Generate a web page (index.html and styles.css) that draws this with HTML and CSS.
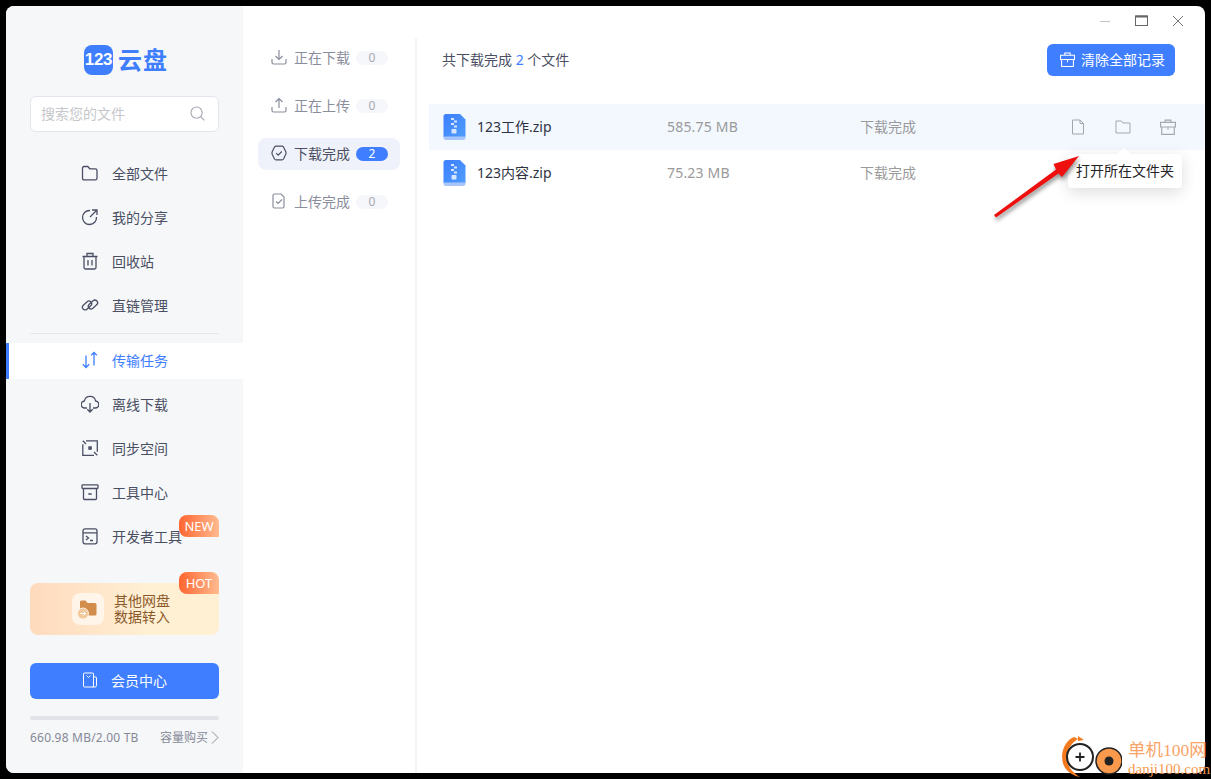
FILE: index.html
```html
<!DOCTYPE html>
<html lang="zh-CN">

<head>
    <meta charset="UTF-8">
    <title>123云盘</title>
    <link rel="stylesheet" href="styles.css">
</head>

<body>
    <div class="window">
        <!-- 左侧导航 -->
        <aside class="side">
            <div class="logo">
                <span class="logo-mark">123</span>
                <span class="logo-text">云盘</span>
            </div>
            <div class="search">
                <span>搜索您的文件</span>
                <svg width="15" height="15" viewBox="0 0 16 16" fill="none" stroke="#a4a7b2" stroke-width="1.200"><circle cx="7" cy="7" r="6"/><path d="M11.500 11.500l3.800 3.800"/></svg>
            </div>
            <nav class="nav">
                <a class="nav-item">
                    <svg viewBox="0 0 18 18"><path d="M1.500 4.200q0-1.700 1.700-1.700h3.600l2 2.300h5.500q1.700 0 1.700 1.700v7.700q0 1.700-1.700 1.700h-11.100q-1.700 0-1.700-1.700z"/></svg>
                    全部文件
                </a>
                <a class="nav-item">
                    <svg viewBox="0 0 18 18"><path d="M9 2.500a7 7 0 1 0 6.500 6.500"/><path d="M9 9l6.500-6.500M11 2h5v5"/></svg>
                    我的分享
                </a>
                <a class="nav-item">
                    <svg viewBox="0 0 18 18"><path d="M1.500 4.500h15M6 4.500v-3h6v3M3 4.500v11q0 1.500 1.500 1.500h9q1.500 0 1.500-1.500v-11M7 8v5.500M11 8v5.500"/></svg>
                    回收站
                </a>
                <a class="nav-item">
                    <svg viewBox="0 0 18 18"><rect x="0.800" y="6.800" width="10.500" height="5.400" rx="2.700" transform="rotate(-42 6 9.500)"/><rect x="6.700" y="5.800" width="10.500" height="5.400" rx="2.700" transform="rotate(-42 12 8.500)"/></svg>
                    直链管理
                </a>
                <div class="nav-line"></div>
                <a class="nav-item active">
                    <svg viewBox="0 0 18 18"><path d="M5 4.500v12M1.800 13.300l3.200 3.200 3.200-3.200M13 14.500v-13M10.200 4.300l2.800-2.800 2.800 2.800"/></svg>
                    传输任务
                </a>
                <a class="nav-item">
                    <svg viewBox="0 0 18 18"><path d="M6 13h-2a3.500 3.500 0 0 1-.6-7 5.700 5.700 0 0 1 11.200 0 3.500 3.500 0 0 1-.6 7h-2"/><path d="M9 8v9M6.300 14.300l2.700 2.700 2.700-2.700"/></svg>
                    离线下载
                </a>
                <a class="nav-item">
                    <svg viewBox="0 0 18 18"><path d="M5 1.800h11.300v11M13 16.300h-11.200v-11M1.800 1.800l3.200 3.200M16.300 16.300l-3.300-3.300"/><rect class="solid" x="7.300" y="7.300" width="3.500" height="3.500"/></svg>
                    同步空间
                </a>
                <a class="nav-item">
                    <svg viewBox="0 0 18 18"><rect x="1" y="1.800" width="16" height="3.700" rx=".8"/><path d="M2.500 5.500v10q0 1 1 1h11q1 0 1-1v-10M7.300 11h3.400"/></svg>
                    工具中心
                </a>
                <a class="nav-item">
                    <svg viewBox="0 0 18 18"><rect x="2" y="1.800" width="14" height="15" rx="2"/><path d="M2 5.800h14M5 9l2.500 2-2.500 2M9 13.500h3"/></svg>
                    开发者工具
                    <span class="tag">NEW</span>
                </a>
            </nav>
            <div class="promo">
                <span class="promo-icon">
                    <svg width="22" height="22" viewBox="0 0 22 22"><path d="M3 4q0-1.500 1.500-1.500h4l2 2.500h7.500q1.500 0 1.500 1.500v9.500q0 1.500-1.500 1.500h-13.500q-1.500 0-1.500-1.500z" fill="#d28c4b"/><circle cx="6" cy="15.500" r="5.500" fill="#f3c99c" stroke="#fdf0e0"/><path d="M3.500 15.500h5M6.500 13.500l2 2-2 2" fill="none" stroke="#fff" stroke-width="1"/></svg>
                </span>
                <span class="promo-text">其他网盘<br>数据转入</span>
                <span class="tag">HOT</span>
            </div>
            <a class="vip">
                <svg width="16" height="16" viewBox="0 0 16 16" fill="none" stroke="#fff" stroke-width="1"><path d="M1.500 2q0-1 1-1h8q1 0 1 1v12q0 1-1 1h-8q-1 0-1-1zM11.500 5h2q1 0 1 1v7.500q0 1.500-1.500 1.500h-2.500M4.500 3.500l2 2 2-2"/></svg>
                会员中心
            </a>
            <div class="bar"></div>
            <div class="quota">
                <span class="used">660.98 MB/2.00 TB</span>
                <span class="buy">容量购买
                    <svg width="8" height="13" viewBox="0 0 8 13" fill="none" stroke="#8a8e9c" stroke-width="1"><path d="M1 .5l6 6-6 6"/></svg>
                </span>
            </div>
        </aside>

        <!-- 传输分类 -->
        <section class="tabs">
            <div class="tabs-list">
                <a class="tab">
                    <svg viewBox="0 0 16 16"><path d="M8 1v9.500M4.500 7l3.500 3.500 3.500-3.500M1 10v3.500q0 1.500 1.500 1.500h11q1.500 0 1.500-1.500v-3.500"/></svg>
                    <span class="tab-name">正在下载</span><span class="num">0</span>
                </a>
                <a class="tab">
                    <svg viewBox="0 0 16 16"><path d="M8 11v-9.500M4.500 5l3.500-3.500 3.500 3.500M1 10v3.500q0 1.500 1.500 1.500h11q1.500 0 1.500-1.500v-3.500"/></svg>
                    <span class="tab-name">正在上传</span><span class="num">0</span>
                </a>
                <a class="tab current">
                    <svg viewBox="0 0 16 16"><path d="M5 1.200h6q1 0 1.500.8l2.300 4.800q.5 1.200 0 2.400l-2.300 4.800q-.5.8-1.500.8h-6q-1 0-1.500-.8l-2.300-4.800q-.5-1.200 0-2.400l2.300-4.800q.5-.8 1.500-.8z"/><path d="M5.200 8.200l2 2 3.600-3.700"/></svg>
                    <span class="tab-name">下载完成</span><span class="num">2</span>
                </a>
                <a class="tab">
                    <svg viewBox="0 0 16 16"><path d="M3.500 1h6.500l3 3v9.500q0 1.500-1.500 1.500h-8q-1.500 0-1.500-1.500v-11q0-1.500 1.500-1.500zM5 8.500l2 2 4-4"/></svg>
                    <span class="tab-name">上传完成</span><span class="num">0</span>
                </a>
            </div>
        </section>

        <!-- 文件列表 -->
        <main class="main">
            <div class="ctrl">
                <svg width="12" height="12" viewBox="0 0 12 12" stroke="#c4c4c4" fill="none"><path d="M1 6.500h10"/></svg>
                <svg width="13" height="12" viewBox="0 0 13 12" stroke="#666" fill="none"><rect x=".5" y="1" width="12" height="9.500"/><path d="M.5 1.500h12" stroke-width="2"/></svg>
                <svg width="12" height="12" viewBox="0 0 12 12" stroke="#777" fill="none"><path d="M1 1l10 10M11 1l-10 10"/></svg>
            </div>
            <div class="head">
                <p>共下载完成 <b>2</b> 个文件</p>
                <a class="clear">
                    <svg width="15" height="15" viewBox="0 0 14 14" fill="none" stroke="#fff" stroke-width="1"><use href="#basket"/></svg>
                    清除全部记录
                </a>
            </div>
            <div class="rows">
                <div class="row hover">
                    <span class="file">
                        <svg class="zip" width="23" height="26" viewBox="0 0 23 26"><use href="#zip"/></svg>
                        123工作.zip
                    </span>
                    <span class="gray size">585.75 MB</span>
                    <span class="gray">下载完成</span>
                    <span class="ops">
                        <svg viewBox="0 0 16 16"><path d="M2.500 1h7.500l3.500 3.500v10.500h-11zM10 1v3.500h3.500"/></svg>
                        <svg viewBox="0 0 16 16"><path d="M1 2h5.500l1.500 2h7v10h-14z"/></svg>
                        <svg viewBox="0 0 14 14"><use href="#basket"/></svg>
                    </span>
                </div>
                <div class="row">
                    <span class="file">
                        <svg class="zip" width="23" height="26" viewBox="0 0 23 26"><use href="#zip"/></svg>
                        123内容.zip
                    </span>
                    <span class="gray size">75.23 MB</span>
                    <span class="gray">下载完成</span>
                </div>
            </div>
            <div class="tip">打开所在文件夹</div>
            <svg class="red-arrow" width="100" height="76" viewBox="0 0 100 76">
                <path d="M6 61L68 15.500 65.500 10 91 2 74 23 70.500 19.500 8 63.500z" fill="#ee0f0f"/>
            </svg>
        </main>
    </div>

    <!-- 水印 -->
    <div class="mark">
        <svg class="mark-logo" width="62" height="46" viewBox="0 0 62 46" fill="none">
            <path d="M14 4C3 8-2 26 6 36c3 4 8 7 14 8-8-5-13-11-13-19 0-8 4-15 11-19z" fill="#f47a20"/>
            <path d="M18 3l6 4-6 1z" fill="#f47a20"/>
            <circle cx="20" cy="24" r="13" fill="#fff" stroke="#222" stroke-width="2"/>
            <path d="M15.500 24h9M20 19.500v9" stroke="#222" stroke-width="1.800"/>
            <circle cx="49" cy="28" r="13" fill="#fb9a4c" stroke="#222" stroke-width="1.500"/>
            <circle cx="49" cy="28" r="4.500" fill="#222"/>
        </svg>
        <div class="mark-text">
            <span class="mark-cn">单机100网</span>
            <span class="mark-en">danji100.com</span>
        </div>
    </div>

    <svg width="0" height="0" class="defs">
        <defs>
            <linearGradient id="zipBlue" x1="0" y1="0" x2="1" y2="1">
                <stop offset="0" stop-color="#3d7fff"/>
                <stop offset="1" stop-color="#4f9dfb"/>
            </linearGradient>
            <g id="zip">
                <path d="M3 0h14l5.500 5.500v17.500h-22v-20.500q0-2.500 2.500-2.500z" fill="url(#zipBlue)"/>
                <path d="M.5 22.500h22v1q0 2.500-2.500 2.500h-17q-2.500 0-2.500-2.500z" fill="#a9c6fb"/>
                <path d="M8 4h3v2h-3zM11 6.500h3v2h-3zM8 9h3v2h-3zM11 11.500h3v2h-3z" fill="#d7e6ff"/>
                <rect x="8.500" y="15" width="5" height="4.500" rx=".8" fill="#d7e6ff"/>
            </g>
            <path id="basket" d="M4.500 3v-2h5v2M.5 3h13v4h-13zM1.500 7v6.500h11v-6.500M7 7v2.500"/>
        </defs>
    </svg>
</body>

</html>
```
FILE: styles.css
```css
* {
    margin: 0;
    padding: 0;
    box-sizing: border-box;
}

body {
    width: 1211px;
    height: 779px;
    padding: 6px;
    background-color: #000;
    font-family: "Noto Sans", "Noto Sans CJK SC", sans-serif;
    font-size: 14px;
    color: #4a4f63;
    overflow: hidden;
    position: relative;
}

.window {
    display: flex;
    width: 1199px;
    height: 767px;
    background-color: #fff;
    border-radius: 8px;
    overflow: hidden;
}

/* 左侧导航 */
.side {
    width: 237px;
    flex-shrink: 0;
    background-color: #f6f7f9;
    padding-top: 39px;
}

.logo {
    display: flex;
    align-items: center;
    gap: 5px;
    height: 30px;
    padding-left: 78px;
}

.logo-mark {
    width: 29px;
    height: 30px;
    border-radius: 8px;
    background-color: #3e7eff;
    color: #fff;
    font-family: "Liberation Sans", sans-serif;
    font-size: 17px;
    font-weight: bold;
    line-height: 30px;
    text-align: center;
    letter-spacing: -0.3px;
}

.logo-text {
    color: #3e7eff;
    font-size: 24px;
    font-weight: bold;
    letter-spacing: 1px;
    line-height: 30px;
}

.search {
    display: flex;
    align-items: center;
    justify-content: space-between;
    height: 36px;
    margin: 21px 24px 0;
    padding: 0 13px 2px 10px;
    background-color: #fff;
    border: 1px solid #e4e6ed;
    border-radius: 6px;
    color: #c6c7cb;
}

.nav {
    display: flex;
    flex-direction: column;
    margin-top: 24px;
}

.nav-item {
    display: flex;
    align-items: center;
    gap: 13px;
    height: 36px;
    margin-bottom: 8px;
    padding: 0 0 2px 75px;
    position: relative;
}

.nav-item svg {
    width: 18px;
    height: 18px;
    fill: none;
    stroke: #4a4f63;
    stroke-width: 1.300;
    flex-shrink: 0;
}

.nav-item .solid {
    fill: #4a4f63;
    stroke: none;
}

.nav-line {
    height: 1px;
    margin: 1px 24px 9px;
    background-color: #e6e7eb;
}

.active {
    background-color: #fff;
    color: #3e7eff;
    box-shadow: inset 3px 0 0 #3e7eff;
}

.nav-item.active svg {
    stroke: #3e7eff;
}

/* NEW HOT 角标 */
.tag {
    position: absolute;
    right: 0;
    width: 40px;
    height: 22px;
    border-radius: 8px 8px 0 8px;
    background: linear-gradient(90deg, #ff6530, #ffbb90);
    color: #fff;
    font-size: 13px;
    line-height: 22px;
    text-align: center;
}

.nav-item .tag {
    top: -4px;
    right: 24px;
}

.promo {
    display: flex;
    align-items: center;
    gap: 10px;
    height: 52px;
    margin: 20px 24px 0;
    padding-left: 42px;
    border-radius: 8px;
    background: linear-gradient(90deg, #ffdabd, #ffefd3 60%);
    position: relative;
}

.promo .tag {
    top: -11px;
}

.promo-icon {
    display: flex;
    align-items: center;
    justify-content: center;
    width: 32px;
    height: 32px;
    border-radius: 8px;
    background-color: rgba(255, 255, 255, 0.6);
}

.promo-text {
    display: block;
    color: #8b5a2b;
    font-size: 14px;
    line-height: 16px;
}

.vip {
    display: flex;
    align-items: center;
    justify-content: center;
    gap: 13px;
    height: 36px;
    margin: 28px 24px 0;
    padding-bottom: 2px;
    border-radius: 6px;
    background-color: #3e7eff;
    color: #fff;
}

.bar {
    height: 4px;
    margin: 17px 24px 0;
    border-radius: 2px;
    background-color: #e1e3e8;
}

.quota {
    display: flex;
    align-items: center;
    justify-content: space-between;
    height: 20px;
    margin: 7px 24px 0;
    color: #858997;
    font-size: 12px;
}

.used {
    letter-spacing: 0.2px;
}

.buy {
    display: flex;
    align-items: center;
    gap: 3px;
}

/* 传输分类 */
.tabs {
    width: 174px;
    flex-shrink: 0;
    padding-top: 32px;
}

.tabs-list {
    height: 100%;
    padding: 4px 15px 0 15px;
    border-right: 2px solid #f3f4f6;
}

.tab {
    display: flex;
    align-items: center;
    height: 32px;
    margin-bottom: 16px;
    padding: 0 0 2px 13px;
    border-radius: 8px;
    color: #8a8e9c;
}

.tab svg {
    width: 16px;
    height: 16px;
    margin-right: 7px;
    fill: none;
    stroke: #8a8e9c;
    stroke-width: 1.200;
}

.tab-name {
    width: 62px;
}

.num {
    width: 32px;
    height: 14px;
    margin-top: 2px;
    border-radius: 7px;
    background-color: #f6f7fb;
    color: #a6a9b3;
    font-size: 12px;
    line-height: 14px;
    text-align: center;
}

.current {
    background-color: #eff2fa;
    color: #4a4f63;
}

.current svg {
    stroke: #4a4f63;
}

.current .num {
    background-color: #3e7eff;
    color: #fff;
}

/* 文件列表 */
.main {
    flex: 1;
    position: relative;
}

.ctrl {
    display: flex;
    justify-content: flex-end;
    gap: 24px;
    height: 38px;
    padding: 9px 21px 0 0;
}

.head {
    display: flex;
    align-items: center;
    justify-content: space-between;
    height: 32px;
    padding: 0 30px 0 25px;
}

.head p {
    margin-bottom: 2px;
    color: #4a4f63;
}

.head b {
    color: #3e7eff;
    font-weight: normal;
}

.clear {
    display: flex;
    align-items: center;
    gap: 6px;
    width: 128px;
    height: 32px;
    padding: 0 0 2px 13px;
    border-radius: 6px;
    background-color: #3e7eff;
    color: #fff;
}

.rows {
    margin: 28px 0 0 12px;
}

.row {
    display: grid;
    grid-template-columns: 224px 193px 1fr auto;
    align-items: center;
    height: 46px;
    padding: 0 29px 2px 14px;
}

.hover {
    background-color: #f3f8ff;
}

.file {
    display: flex;
    align-items: center;
    gap: 11px;
    color: #2e3243;
}

.zip {
    margin-top: 2px;
}

.gray {
    color: #9a9a9a;
}

.size {
    letter-spacing: 0.2px;
}

.ops {
    display: flex;
    gap: 29px;
    margin-top: 2px;
}

.ops svg {
    width: 16px;
    height: 16px;
    fill: none;
    stroke: #a3a6ae;
}

/* 提示 */
.tip {
    position: absolute;
    left: 651px;
    top: 148px;
    width: 114px;
    height: 34px;
    background-color: #fff;
    border-radius: 4px;
    box-shadow: 0 4px 16px rgba(0, 0, 0, 0.14);
    color: #222;
    line-height: 34px;
    text-align: center;
}

.tip::before {
    content: "";
    position: absolute;
    left: 49px;
    top: -6px;
    border-left: 7px solid transparent;
    border-right: 7px solid transparent;
    border-bottom: 6px solid #fff;
}

.red-arrow {
    position: absolute;
    left: 571px;
    top: 148px;
    filter: drop-shadow(1px 3px 2px rgba(0, 0, 0, 0.45));
}

/* 水印 */
.mark {
    position: absolute;
    left: 1060px;
    top: 733px;
    display: flex;
    gap: 6px;
    white-space: nowrap;
}

.mark-logo {
    flex-shrink: 0;
}

.mark-text {
    display: flex;
    flex-direction: column;
    margin-top: 6px;
}

.mark-cn {
    color: #f9a468;
    font-size: 17.500px;
    line-height: 22px;
    font-family: "Liberation Serif", "Noto Sans CJK SC", serif;
}

.mark-en {
    color: #f79a4f;
    font-size: 15px;
    line-height: 16px;
    font-family: "Liberation Serif", serif;
}

.defs {
    position: absolute;
}
```
